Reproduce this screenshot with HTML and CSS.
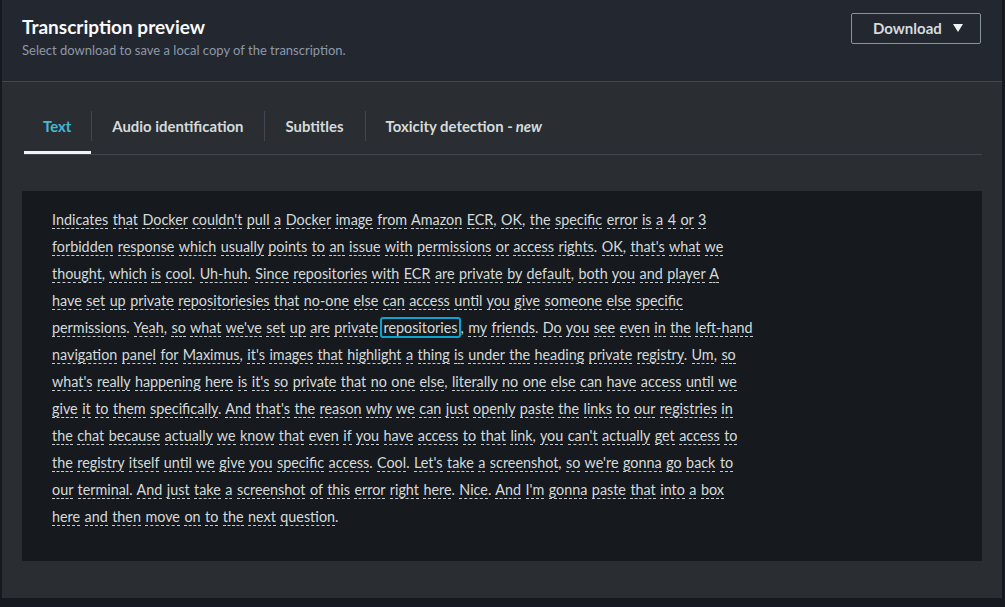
FILE: index.html
```html
<!DOCTYPE html>
<html lang="en">
<head>
<meta charset="utf-8">
<title>Transcription preview</title>
<link rel="stylesheet" href="styles.css">
</head>
<body>
<div class="container">
  <header class="header">
    <div class="heading">
      <h2 class="title">Transcription preview</h2>
      <p class="subtitle">Select download to save a local copy of the transcription.</p>
    </div>
    <button class="download">Download
      <svg class="caret" width="10" height="8" viewBox="0 0 10 8"><polygon points="0,0 10,0 5,8" fill="#f2f3f3"/></svg>
    </button>
  </header>
  <section class="body">
    <nav class="tabs">
      <div class="tab active">Text</div>
      <div class="tab">Audio identification</div>
      <div class="tab">Subtitles</div>
      <div class="tab">Toxicity detection - <em>new</em></div>
    </nav>
    <div class="panel">
      <p class="transcript">
<span class="w">Indicates</span> <span class="w">that</span> <span class="w">Docker</span> <span class="w">couldn't</span> <span class="w">pull</span> <span class="w">a</span> <span class="w">Docker</span> <span class="w">image</span> <span class="w">from</span> <span class="w">Amazon</span> <span class="w">ECR</span>, <span class="w">OK</span>, <span class="w">the</span> <span class="w">specific</span> <span class="w">error</span> <span class="w">is</span> <span class="w">a</span> <span class="w">4</span> <span class="w">or</span> <span class="w">3</span><br>
<span class="w">forbidden</span> <span class="w">response</span> <span class="w">which</span> <span class="w">usually</span> <span class="w">points</span> <span class="w">to</span> <span class="w">an</span> <span class="w">issue</span> <span class="w">with</span> <span class="w">permissions</span> <span class="w">or</span> <span class="w">access</span> <span class="w">rights</span>. <span class="w">OK</span>, <span class="w">that's</span> <span class="w">what</span> <span class="w">we</span><br>
<span class="w">thought</span>, <span class="w">which</span> <span class="w">is</span> <span class="w">cool</span>. <span class="w">Uh-huh</span>. <span class="w">Since</span> <span class="w">repositories</span> <span class="w">with</span> <span class="w">ECR</span> <span class="w">are</span> <span class="w">private</span> <span class="w">by</span> <span class="w">default</span>, <span class="w">both</span> <span class="w">you</span> <span class="w">and</span> <span class="w">player</span> <span class="w">A</span><br>
<span class="w">have</span> <span class="w">set</span> <span class="w">up</span> <span class="w">private</span> <span class="w">repositoriesies</span> <span class="w">that</span> <span class="w">no-one</span> <span class="w">else</span> <span class="w">can</span> <span class="w">access</span> <span class="w">until</span> <span class="w">you</span> <span class="w">give</span> <span class="w">someone</span> <span class="w">else</span> <span class="w">specific</span><br>
<span class="w">permissions</span>. <span class="w">Yeah</span>, <span class="w">so</span> <span class="w">what</span> <span class="w">we've</span> <span class="w">set</span> <span class="w">up</span> <span class="w">are</span> <span class="w">private</span> <span class="w current">repositories</span>, <span class="w">my</span> <span class="w">friends</span>. <span class="w">Do</span> <span class="w">you</span> <span class="w">see</span> <span class="w">even</span> <span class="w">in</span> <span class="w">the</span> <span class="w">left-hand</span><br>
<span class="w">navigation</span> <span class="w">panel</span> <span class="w">for</span> <span class="w">Maximus</span>, <span class="w">it's</span> <span class="w">images</span> <span class="w">that</span> <span class="w">highlight</span> <span class="w">a</span> <span class="w">thing</span> <span class="w">is</span> <span class="w">under</span> <span class="w">the</span> <span class="w">heading</span> <span class="w">private</span> <span class="w">registry</span>. <span class="w">Um</span>, <span class="w">so</span><br>
<span class="w">what's</span> <span class="w">really</span> <span class="w">happening</span> <span class="w">here</span> <span class="w">is</span> <span class="w">it's</span> <span class="w">so</span> <span class="w">private</span> <span class="w">that</span> <span class="w">no</span> <span class="w">one</span> <span class="w">else</span>, <span class="w">literally</span> <span class="w">no</span> <span class="w">one</span> <span class="w">else</span> <span class="w">can</span> <span class="w">have</span> <span class="w">access</span> <span class="w">until</span> <span class="w">we</span><br>
<span class="w">give</span> <span class="w">it</span> <span class="w">to</span> <span class="w">them</span> <span class="w">specifically</span>. <span class="w">And</span> <span class="w">that's</span> <span class="w">the</span> <span class="w">reason</span> <span class="w">why</span> <span class="w">we</span> <span class="w">can</span> <span class="w">just</span> <span class="w">openly</span> <span class="w">paste</span> <span class="w">the</span> <span class="w">links</span> <span class="w">to</span> <span class="w">our</span> <span class="w">registries</span> <span class="w">in</span><br>
<span class="w">the</span> <span class="w">chat</span> <span class="w">because</span> <span class="w">actually</span> <span class="w">we</span> <span class="w">know</span> <span class="w">that</span> <span class="w">even</span> <span class="w">if</span> <span class="w">you</span> <span class="w">have</span> <span class="w">access</span> <span class="w">to</span> <span class="w">that</span> <span class="w">link</span>, <span class="w">you</span> <span class="w">can't</span> <span class="w">actually</span> <span class="w">get</span> <span class="w">access</span> <span class="w">to</span><br>
<span class="w">the</span> <span class="w">registry</span> <span class="w">itself</span> <span class="w">until</span> <span class="w">we</span> <span class="w">give</span> <span class="w">you</span> <span class="w">specific</span> <span class="w">access</span>. <span class="w">Cool</span>. <span class="w">Let's</span> <span class="w">take</span> <span class="w">a</span> <span class="w">screenshot</span>, <span class="w">so</span> <span class="w">we're</span> <span class="w">gonna</span> <span class="w">go</span> <span class="w">back</span> <span class="w">to</span><br>
<span class="w">our</span> <span class="w">terminal</span>. <span class="w">And</span> <span class="w">just</span> <span class="w">take</span> <span class="w">a</span> <span class="w">screenshot</span> <span class="w">of</span> <span class="w">this</span> <span class="w">error</span> <span class="w">right</span> <span class="w">here</span>. <span class="w">Nice</span>. <span class="w">And</span> <span class="w">I'm</span> <span class="w">gonna</span> <span class="w">paste</span> <span class="w">that</span> <span class="w">into</span> <span class="w">a</span> <span class="w">box</span><br>
<span class="w">here</span> <span class="w">and</span> <span class="w">then</span> <span class="w">move</span> <span class="w">on</span> <span class="w">to</span> <span class="w">the</span> <span class="w">next</span> <span class="w">question</span>.
      </p>
    </div>
  </section>
</div>
</body>
</html>
```

FILE: styles.css
```css
* { box-sizing: border-box; }

body {
  margin: 0;
  background: #16191f;
  font-family: Lato, "Noto Sans", sans-serif;
  color: #d5dbdb;
}

.container {
  margin-left: 2px;
  width: 1000px;
  height: 598px;
  background: #2a2e33;
}

.header {
  height: 82px;
  background: #232730;
  border-bottom: 1px solid #414750;
  display: flex;
  justify-content: space-between;
  align-items: flex-start;
  padding: 15px 21px 0 20px;
}

.title {
  margin: 0;
  font-size: 19px;
  line-height: 24px;
  font-weight: 700;
  color: #fafafa;
}

.subtitle {
  margin: 3px 0 0;
  font-size: 13px;
  line-height: 16px;
  color: #8d99a8;
}

.download {
  margin-top: -2px;
  width: 130px;
  height: 31px;
  display: flex;
  align-items: center;
  gap: 11px;
  padding: 0 0 1px 21px;
  background: transparent;
  border: 1px solid #879596;
  border-radius: 2px;
  font-family: inherit;
  font-size: 15px;
  font-weight: 700;
  color: #d5dbdb;
}

.caret { display: block; }

.body {
  padding: 16px 20px 37px 20px;
}

.tabs {
  margin-left: 2px;
  display: flex;
  height: 57px;
  border-bottom: 1px solid #414750;
}

.tab {
  position: relative;
  display: flex;
  align-items: center;
  height: 55px;
  padding: 0 20px 0 19px;
  font-size: 14.9px;
  font-weight: 700;
  color: #d5dbdb;
}

.tab + .tab { padding: 0 21px; }

.tab em { font-style: italic; margin-left: 3px; }

.tab + .tab::before {
  content: "";
  position: absolute;
  left: 0;
  top: 13px;
  width: 1px;
  height: 30px;
  background: #414750;
}

.tab.active { color: #44b9d6; }

.tab.active::after {
  content: "";
  position: absolute;
  left: 0;
  right: 0;
  bottom: -1px;
  height: 3px;
  background: #f2f3f3;
}

.panel {
  margin-top: 36px;
  height: 370px;
  background: #161a1f;
  padding: 15px 30px 14px;
}

.transcript {
  margin: 0;
  font-size: 14.35px;
  line-height: 27px;
  word-spacing: 0.8px;
  color: #d5dbdb;
  white-space: nowrap;
}

.w {
  border-bottom: 1px dashed #c7cdd0;
}

.w.current {
  border: 2px solid #0aa4cf;
  border-radius: 3px;
  padding: 0 1px;
  margin-left: -2px;
}
```
